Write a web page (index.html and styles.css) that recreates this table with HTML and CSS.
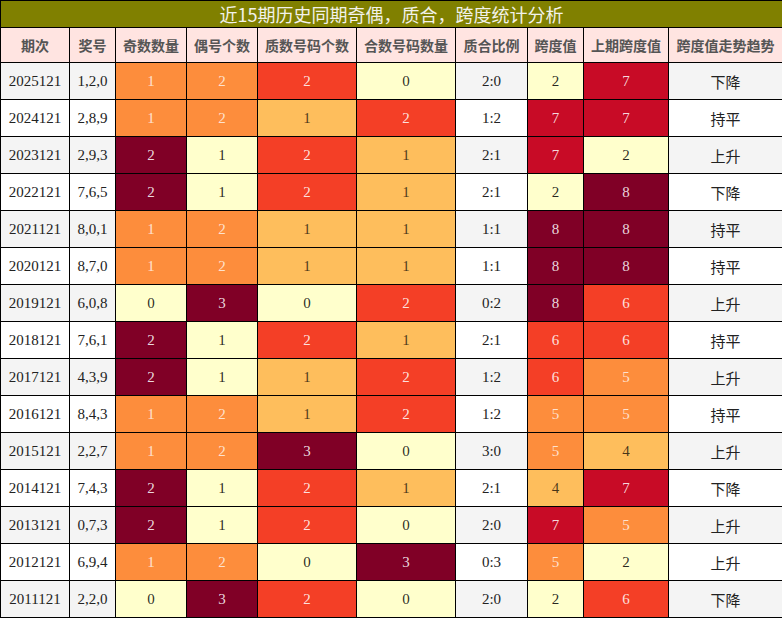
FILE: index.html
```html
<!DOCTYPE html>
<html lang="zh">
<head>
<meta charset="utf-8">
<title>近15期历史同期奇偶，质合，跨度统计分析</title>
<link rel="stylesheet" href="styles.css">
</head>
<body>
<table class="stats">
  <colgroup>
    <col class="w-period"><col class="w-nums"><col class="w-odd"><col class="w-even"><col class="w-prime"><col class="w-comp"><col class="w-ratio"><col class="w-span"><col class="w-prev"><col class="w-trend">
  </colgroup>
  <thead>
    <tr><th class="title" colspan="10">近15期历史同期奇偶，质合，跨度统计分析</th></tr>
    <tr class="head">
      <th>期次</th><th>奖号</th><th>奇数数量</th><th>偶号个数</th><th>质数号码个数</th><th>合数号码数量</th><th>质合比例</th><th>跨度值</th><th>上期跨度值</th><th>跨度值走势趋势</th>
    </tr>
  </thead>
  <tbody>
    <tr class="odd"><td>2025121</td><td>1,2,0</td><td class="c-o">1</td><td class="c-o">2</td><td class="c-r">2</td><td class="c-y">0</td><td>2:0</td><td class="c-y">2</td><td class="c-cr">7</td><td class="trend">下降</td></tr>
    <tr class="even"><td>2024121</td><td>2,8,9</td><td class="c-o">1</td><td class="c-o">2</td><td class="c-lo">1</td><td class="c-r">2</td><td>1:2</td><td class="c-cr">7</td><td class="c-cr">7</td><td class="trend">持平</td></tr>
    <tr class="odd"><td>2023121</td><td>2,9,3</td><td class="c-m">2</td><td class="c-y">1</td><td class="c-r">2</td><td class="c-lo">1</td><td>2:1</td><td class="c-cr">7</td><td class="c-y">2</td><td class="trend">上升</td></tr>
    <tr class="even"><td>2022121</td><td>7,6,5</td><td class="c-m">2</td><td class="c-y">1</td><td class="c-r">2</td><td class="c-lo">1</td><td>2:1</td><td class="c-y">2</td><td class="c-m">8</td><td class="trend">下降</td></tr>
    <tr class="odd"><td>2021121</td><td>8,0,1</td><td class="c-o">1</td><td class="c-o">2</td><td class="c-lo">1</td><td class="c-lo">1</td><td>1:1</td><td class="c-m">8</td><td class="c-m">8</td><td class="trend">持平</td></tr>
    <tr class="even"><td>2020121</td><td>8,7,0</td><td class="c-o">1</td><td class="c-o">2</td><td class="c-lo">1</td><td class="c-lo">1</td><td>1:1</td><td class="c-m">8</td><td class="c-m">8</td><td class="trend">持平</td></tr>
    <tr class="odd"><td>2019121</td><td>6,0,8</td><td class="c-y">0</td><td class="c-m">3</td><td class="c-y">0</td><td class="c-r">2</td><td>0:2</td><td class="c-m">8</td><td class="c-r">6</td><td class="trend">上升</td></tr>
    <tr class="even"><td>2018121</td><td>7,6,1</td><td class="c-m">2</td><td class="c-y">1</td><td class="c-r">2</td><td class="c-lo">1</td><td>2:1</td><td class="c-r">6</td><td class="c-r">6</td><td class="trend">持平</td></tr>
    <tr class="odd"><td>2017121</td><td>4,3,9</td><td class="c-m">2</td><td class="c-y">1</td><td class="c-lo">1</td><td class="c-r">2</td><td>1:2</td><td class="c-r">6</td><td class="c-o">5</td><td class="trend">上升</td></tr>
    <tr class="even"><td>2016121</td><td>8,4,3</td><td class="c-o">1</td><td class="c-o">2</td><td class="c-lo">1</td><td class="c-r">2</td><td>1:2</td><td class="c-o">5</td><td class="c-o">5</td><td class="trend">持平</td></tr>
    <tr class="odd"><td>2015121</td><td>2,2,7</td><td class="c-o">1</td><td class="c-o">2</td><td class="c-m">3</td><td class="c-y">0</td><td>3:0</td><td class="c-o">5</td><td class="c-lo">4</td><td class="trend">上升</td></tr>
    <tr class="even"><td>2014121</td><td>7,4,3</td><td class="c-m">2</td><td class="c-y">1</td><td class="c-r">2</td><td class="c-lo">1</td><td>2:1</td><td class="c-lo">4</td><td class="c-cr">7</td><td class="trend">下降</td></tr>
    <tr class="odd"><td>2013121</td><td>0,7,3</td><td class="c-m">2</td><td class="c-y">1</td><td class="c-r">2</td><td class="c-y">0</td><td>2:0</td><td class="c-cr">7</td><td class="c-o">5</td><td class="trend">上升</td></tr>
    <tr class="even"><td>2012121</td><td>6,9,4</td><td class="c-o">1</td><td class="c-o">2</td><td class="c-y">0</td><td class="c-m">3</td><td>0:3</td><td class="c-o">5</td><td class="c-y">2</td><td class="trend">上升</td></tr>
    <tr class="odd"><td>2011121</td><td>2,2,0</td><td class="c-y">0</td><td class="c-m">3</td><td class="c-r">2</td><td class="c-y">0</td><td>2:0</td><td class="c-y">2</td><td class="c-r">6</td><td class="trend">下降</td></tr>
  </tbody>
</table>
</body>
</html>
```
FILE: styles.css
```css
html, body {
  margin: 0;
  padding: 0;
  background: #ffffff;
}

.stats {
  width: 782px;
  table-layout: fixed;
  border-collapse: collapse;
  font-family: "Liberation Serif", "Times New Roman", serif;
  font-size: 15px;
  color: #222;
}

.w-period { width: 69px; }
.w-nums { width: 46px; }
.w-odd { width: 71px; }
.w-even { width: 71px; }
.w-prime { width: 99px; }
.w-comp { width: 99px; }
.w-ratio { width: 72px; }
.w-span { width: 56px; }
.w-prev { width: 85px; }
.w-trend { width: 114px; }

.stats th,
.stats td {
  border: 1px solid #000;
  padding: 0;
  text-align: center;
  vertical-align: middle;
}

.stats .title {
  height: 26px;
  background: #808000;
  color: #f2f2ea;
  font-family: "Noto Sans CJK SC", "Noto Sans", sans-serif;
  font-size: 18px;
  font-weight: normal;
  line-height: 26px;
}

.head th {
  height: 34px;
  background: #ffe4e1;
  color: #555;
  font-family: "Noto Sans CJK SC", "Noto Sans", sans-serif;
  font-size: 14px;
  font-weight: bold;
}

.stats tbody td {
  height: 36px;
}

.odd td { background: #f4f4f4; }
.even td { background: #ffffff; }

.stats td.trend {
  font-family: "Noto Sans CJK SC", "Noto Sans", sans-serif;
  font-size: 15px;
  color: #222;
}

.stats td.c-y { background: #ffffcc; color: rgba(0, 0, 0, 0.85); }
.stats td.c-lo { background: #febe5c; color: rgba(0, 0, 0, 0.72); }
.stats td.c-o { background: #fd8d3c; color: rgba(255, 255, 255, 0.75); }
.stats td.c-r { background: #f43f26; color: rgba(255, 255, 255, 0.85); }
.stats td.c-cr { background: #c80b26; color: rgba(255, 255, 255, 0.85); }
.stats td.c-m { background: #800026; color: rgba(255, 255, 255, 0.85); }
```
